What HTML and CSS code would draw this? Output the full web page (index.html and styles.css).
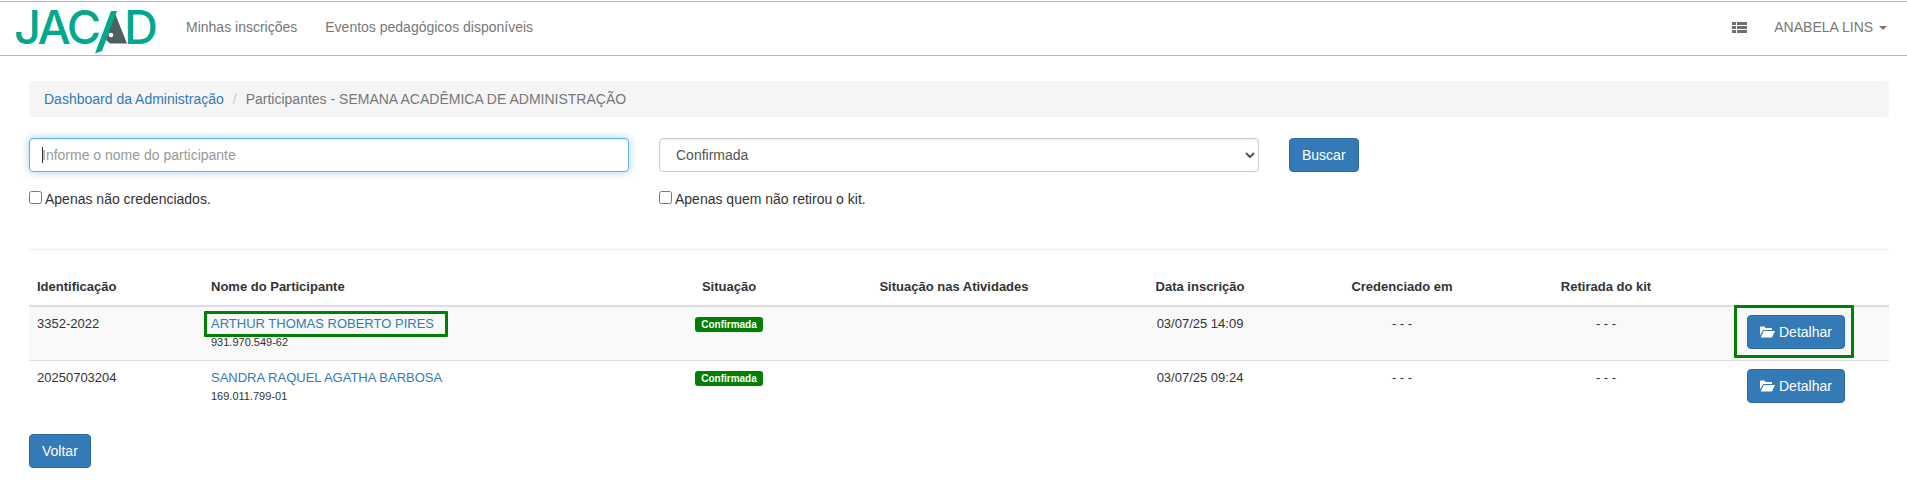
FILE: index.html
```html
<!DOCTYPE html>
<html lang="pt-BR">
<head>
<meta charset="utf-8">
<title>Participantes</title>
<link rel="stylesheet" href="styles.css">
</head>
<body>
<nav class="navbar">
  <a class="brand" href="#" aria-label="JACAD">
    <svg class="logo" viewBox="0 0 170 54" width="170" height="54">
      <polygon class="logo-a" points="114,9 127,41.5 110,41.5 106,38"/>
      <polygon class="logo-slash" points="111,9 117,9 102,49 95,51.5"/>
      <circle class="logo-dot" cx="111" cy="33" r="2.3"/>
      <text class="logo-text" x="14" y="41.5">JAC</text>
      <text class="logo-text" x="124" y="41.5">D</text>
    </svg>
  </a>
  <a class="nav-link" href="#">Minhas inscrições</a>
  <a class="nav-link" href="#">Eventos pedagógicos disponíveis</a>
  <span class="nav-spacer"></span>
  <svg class="th-list" viewBox="0 0 15 11" width="15" height="11">
    <path d="M0 0h4v3H0zM5 0h10v3H5zM0 4h4v3H0zM5 4h10v3H5zM0 8h4v3H0zM5 8h10v3H5z"/>
  </svg>
  <a class="nav-user" href="#">ANABELA LINS <span class="caret"></span></a>
</nav>

<main class="page">
  <ol class="breadcrumb">
    <li><a href="#">Dashboard da Administração</a></li>
    <li class="sep">/</li>
    <li class="current">Participantes - SEMANA ACADÊMICA DE ADMINISTRAÇÃO</li>
  </ol>

  <form class="filters">
    <div class="col-name">
      <div class="input-wrap">
        <input class="control control-focus" type="text" placeholder="Informe o nome do participante">
        <span class="text-cursor"></span>
      </div>
      <label class="check"><input type="checkbox"><span>Apenas não credenciados.</span></label>
    </div>
    <div class="col-status">
      <select class="control">
        <option>Confirmada</option>
      </select>
      <label class="check"><input type="checkbox"><span>Apenas quem não retirou o kit.</span></label>
    </div>
    <div class="col-btn">
      <button class="btn" type="button">Buscar</button>
    </div>
  </form>

  <hr class="divider">

  <table class="grid">
    <colgroup>
      <col class="c1"><col class="c2"><col class="c3"><col class="c4"><col class="c5"><col class="c6"><col class="c7"><col class="c8">
    </colgroup>
    <thead>
      <tr>
        <th>Identificação</th>
        <th>Nome do Participante</th>
        <th class="center">Situação</th>
        <th class="center">Situação nas Atividades</th>
        <th class="center">Data inscrição</th>
        <th class="center">Credenciado em</th>
        <th class="center">Retirada do kit</th>
        <th></th>
      </tr>
    </thead>
    <tbody>
      <tr class="striped">
        <td>3352-2022</td>
        <td><span class="name-cell mark-name"><a href="#">ARTHUR THOMAS ROBERTO PIRES</a></span><div class="cpf">931.970.549-62</div></td>
        <td class="center"><span class="badge">Confirmada</span></td>
        <td></td>
        <td class="center">03/07/25 14:09</td>
        <td class="center">- - -</td>
        <td class="center">- - -</td>
        <td class="center"><span class="mark-btn"><button class="btn" type="button"><svg class="folder" viewBox="0 0 15 12" width="15" height="12"><path d="M0 1.5C0 .8.5.5 1 .5h3.5l1 1.5H11c.6 0 1 .4 1 1v1H3.2L0 9.5z"/><path d="M3.8 5H15l-3 6.5H.7z"/></svg> Detalhar</button></span></td>
      </tr>
      <tr>
        <td>20250703204</td>
        <td><span class="name-cell"><a href="#">SANDRA RAQUEL AGATHA BARBOSA</a></span><div class="cpf">169.011.799-01</div></td>
        <td class="center"><span class="badge">Confirmada</span></td>
        <td></td>
        <td class="center">03/07/25 09:24</td>
        <td class="center">- - -</td>
        <td class="center">- - -</td>
        <td class="center"><button class="btn" type="button"><svg class="folder" viewBox="0 0 15 12" width="15" height="12"><path d="M0 1.5C0 .8.5.5 1 .5h3.5l1 1.5H11c.6 0 1 .4 1 1v1H3.2L0 9.5z"/><path d="M3.8 5H15l-3 6.5H.7z"/></svg> Detalhar</button></td>
      </tr>
    </tbody>
  </table>

  <button class="btn back" type="button">Voltar</button>
</main>
</body>
</html>
```

FILE: styles.css
```css
* { box-sizing: border-box; }
html, body { margin: 0; padding: 0; height: 480px; overflow: hidden; background: #fff; }
body {
  font-family: "Liberation Sans", Arial, sans-serif;
  font-size: 14px;
  line-height: 20px;
  color: #333;
}
a { color: #337ab7; text-decoration: none; }

/* navbar */
.navbar {
  display: flex;
  align-items: center;
  height: 55px;
  margin-top: 1px;
  padding-bottom: 3px;
  border-top: 1px solid #b4b8b6;
  border-bottom: 1px solid #b4b4b4;
  background: #fff;
}
.brand { display: block; width: 186px; height: 50px; flex: none; }
.logo { display: block; overflow: visible; }
.logo-text {
  font-family: Inter, Lato, sans-serif;
  font-size: 47px;
  font-weight: 500;
  letter-spacing: -2.5px;
  fill: #00a88f;
}
.logo-a { fill: #4d5f5e; }
.logo-slash { fill: #00a88f; }
.logo-dot { fill: #fff; }
.nav-link { color: #777; margin-right: 28px; }
.nav-spacer { flex: 1; }
.th-list { fill: #6f6f6f; margin-right: 27px; display: block; }
.nav-user { color: #777; margin-right: 20px; white-space: nowrap; }
.caret {
  display: inline-block;
  width: 0; height: 0;
  margin-left: 2px;
  vertical-align: middle;
  border-top: 4px solid #777;
  border-left: 4px solid transparent;
  border-right: 4px solid transparent;
}

/* page */
.page { padding: 25px 18px 0 29px; }
.breadcrumb {
  display: flex;
  list-style: none;
  margin: 0 0 21px;
  padding: 8px 15px;
  height: 36px;
  background: #f5f5f5;
  border-radius: 4px;
}
.sep { color: #ccc; padding: 0 9px; }
.current { color: #777; }

/* filters */
.filters { display: flex; height: 111px; }
.col-name { width: 600px; margin-right: 30px; }
.col-status { width: 600px; margin-right: 30px; }
.input-wrap { position: relative; }
.control {
  display: block;
  width: 100%;
  height: 34px;
  padding: 6px 12px;
  font: inherit;
  color: #555;
  background: #fff;
  border: 1px solid #ccc;
  border-radius: 4px;
  box-shadow: inset 0 1px 1px rgba(0,0,0,.075);
}
.control::placeholder { color: #999; opacity: 1; }
.control-focus {
  border-color: #66afe9;
  outline: 0;
  box-shadow: inset 0 1px 1px rgba(0,0,0,.075), 0 0 8px rgba(102,175,233,.6);
}
.text-cursor {
  position: absolute;
  left: 13px;
  top: 9px;
  width: 1px;
  height: 16px;
  background: #333;
}
.check { display: flex; align-items: center; height: 20px; margin-top: 17px; color: #333; }
.check input { width: 13px; height: 13px; margin: 0 3px 4px 0; flex: none; }
.btn {
  display: inline-block;
  height: 34px;
  padding: 6px 12px;
  font: inherit;
  color: #fff;
  background: #337ab7;
  border: 1px solid #2e6da4;
  border-radius: 4px;
  white-space: nowrap;
}
.folder { fill: #fff; vertical-align: -1px; }

.divider { margin: 0 0 19px; border: 0; border-top: 1px solid #eee; }

/* table */
.grid { width: 1860px; table-layout: fixed; border-collapse: collapse; margin-bottom: 20px; font-size: 13px; }
.c1 { width: 174px; } .c2 { width: 452px; } .c3 { width: 148px; } .c4 { width: 302px; }
.c5 { width: 190px; } .c6 { width: 214px; } .c7 { width: 194px; } .c8 { width: 186px; }
.grid th, .grid td { padding: 8px; vertical-align: top; text-align: left; }
.grid th { border-bottom: 2px solid #ddd; font-weight: 700; }
.grid td { border-top: 1px solid #ddd; line-height: 18px; }
.grid thead + tbody tr:first-child td { border-top: 0; }
.grid .center { text-align: center; }
.grid .btn { font-size: 14px; line-height: 20px; }
.striped { background: #f9f9f9; }
.cpf { font-size: 11px; line-height: 19px; color: #333; }
.name-cell { display: block; width: max-content; position: relative; }
.mark-name::after {
  content: "";
  position: absolute;
  left: -7px; right: -14px; top: -4px; bottom: -4px;
  border: 3px solid #008000;
  border-radius: 1px;
  pointer-events: none;
}
.badge {
  display: inline-block;
  padding: 2px 6px 2px;
  font-size: 10px;
  line-height: 11px;
  font-weight: 700;
  color: #fff;
  background: #008000;
  border-radius: 3px;
  vertical-align: top;
  margin-top: 2px;
}
.mark-btn { display: inline-block; position: relative; }
.mark-btn::after {
  content: "";
  position: absolute;
  left: -13px; right: -9px; top: -10px; bottom: -9px;
  border: 3px solid #008000;
  border-radius: 1px;
  pointer-events: none;
}
.back { display: block; }
```
